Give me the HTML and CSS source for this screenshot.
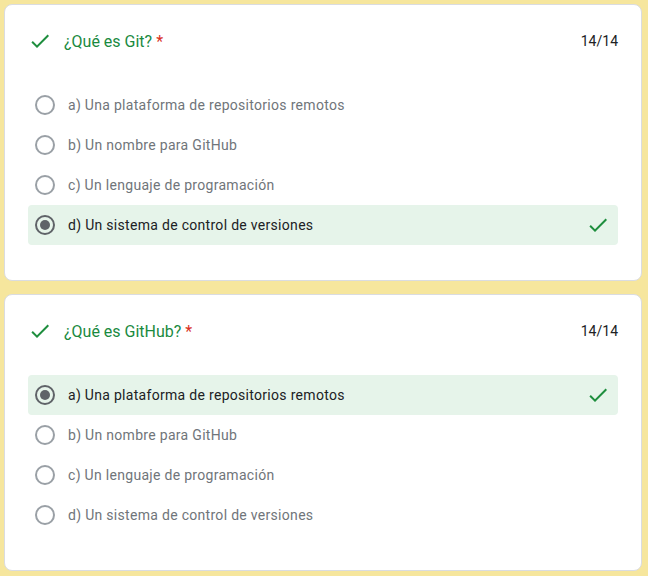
FILE: index.html
```html
<!DOCTYPE html>
<html lang="es">
<head>
<meta charset="utf-8">
<link rel="stylesheet" href="styles.css">
</head>
<body>
<div class="page">
  <section class="card">
    <div class="head">
      <svg class="check" viewBox="0 0 24 24"><path d="M9 16.17L4.83 12l-1.42 1.41L9 19 21 7l-1.41-1.41z"/></svg>
      <div class="title">¿Qué es Git? <span class="req">*</span></div>
      <div class="score">14/14</div>
    </div>
    <ul class="opts">
      <li class="opt"><span class="radio"></span><span class="label">a) Una plataforma de repositorios remotos</span></li>
      <li class="opt"><span class="radio"></span><span class="label">b) Un nombre para GitHub</span></li>
      <li class="opt"><span class="radio"></span><span class="label">c) Un lenguaje de programación</span></li>
      <li class="opt correct"><span class="radio on"></span><span class="label">d) Un sistema de control de versiones</span><svg class="check right" viewBox="0 0 24 24"><path d="M9 16.17L4.83 12l-1.42 1.41L9 19 21 7l-1.41-1.41z"/></svg></li>
    </ul>
  </section>
  <section class="card">
    <div class="head">
      <svg class="check" viewBox="0 0 24 24"><path d="M9 16.17L4.83 12l-1.42 1.41L9 19 21 7l-1.41-1.41z"/></svg>
      <div class="title">¿Qué es GitHub? <span class="req">*</span></div>
      <div class="score">14/14</div>
    </div>
    <ul class="opts">
      <li class="opt correct"><span class="radio on"></span><span class="label">a) Una plataforma de repositorios remotos</span><svg class="check right" viewBox="0 0 24 24"><path d="M9 16.17L4.83 12l-1.42 1.41L9 19 21 7l-1.41-1.41z"/></svg></li>
      <li class="opt"><span class="radio"></span><span class="label">b) Un nombre para GitHub</span></li>
      <li class="opt"><span class="radio"></span><span class="label">c) Un lenguaje de programación</span></li>
      <li class="opt"><span class="radio"></span><span class="label">d) Un sistema de control de versiones</span></li>
    </ul>
  </section>
</div>
</body>
</html>
```
FILE: styles.css
```css
html, body {
  margin: 0;
  padding: 0;
  background: #f6e69d;
  font-family: Roboto, "Noto Sans", sans-serif;
}
.page {
  display: flex;
  flex-direction: column;
  gap: 13px;
  padding: 4px 6px 4px 4px;
}
.card {
  background: #fff;
  border: 1px solid #dadce0;
  border-radius: 8px;
  padding: 24px 23px 0;
  box-sizing: border-box;
  height: 277px;
}
.head {
  display: flex;
  align-items: center;
  height: 24px;
}
.check {
  width: 24px;
  height: 24px;
  fill: #1e8e3e;
  flex: none;
}
.title {
  margin-left: 12px;
  font-size: 16px;
  color: #1a8a3f;
  letter-spacing: 0;
  flex: 1;
}
.req {
  color: #d93025;
}
.score {
  font-size: 14px;
  color: #202124;
}
.opts {
  list-style: none;
  margin: 32px 0 0;
  padding: 0;
}
.opt {
  display: flex;
  align-items: center;
  height: 40px;
  padding: 0 8px 0 7px;
  border-radius: 4px;
}
.opt.correct {
  background: #e6f4ea;
}
.radio {
  width: 20px;
  height: 20px;
  box-sizing: border-box;
  border: 2px solid #9aa0a6;
  border-radius: 50%;
  flex: none;
  display: flex;
  align-items: center;
  justify-content: center;
}
.radio.on {
  border-color: #5f6368;
}
.radio.on::after {
  content: "";
  width: 10px;
  height: 10px;
  border-radius: 50%;
  background: #5f6368;
}
.label {
  margin-left: 13px;
  font-size: 14px;
  color: #70757a;
  letter-spacing: 0.3px;
  flex: 1;
}
.correct .label {
  color: #202124;
}
```
